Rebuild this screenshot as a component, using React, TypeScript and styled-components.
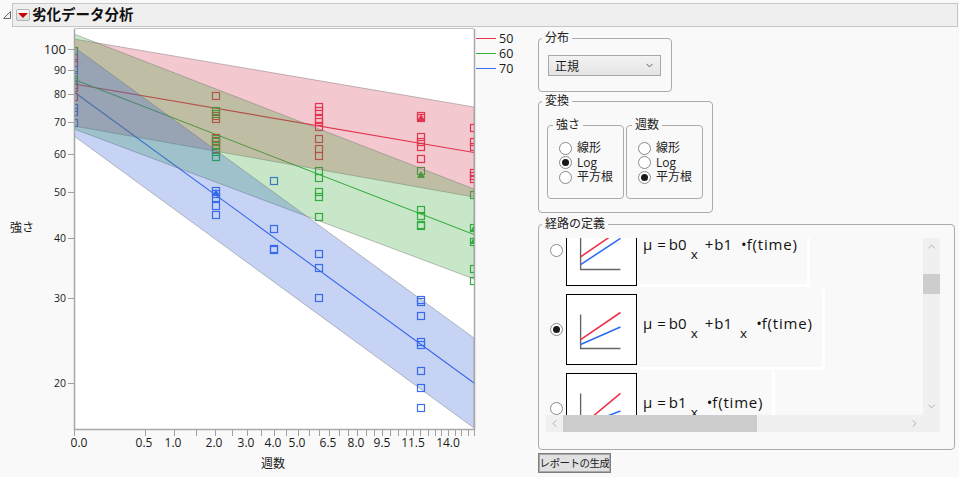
import React from 'react'
import styled, { createGlobalStyle } from 'styled-components'
import { ChevronDown, ChevronLeft, ChevronRight, ChevronUp } from 'lucide-react'

const FONT = `"Open Sans", "Noto Sans CJK JP", sans-serif`

const GlobalStyle = createGlobalStyle`
  html, body {
    margin: 0;
    background: #f9f9f9;
    color: #1a1a1a;
    font-family: ${FONT};
    overflow: hidden;
  }
`

const Page = styled.div`
  width: 959px;
  height: 477px;
  padding-top: 3px;
  box-sizing: border-box;
`

const Header = styled.header`
  display: flex;
  align-items: center;
  height: 24px;
  padding-left: 2px;
`

const Disclosure = styled.svg`
  width: 10px;
  height: 10px;
  flex: none;
`

const TitleBar = styled.div`
  display: flex;
  align-items: center;
  flex: 1;
  height: 100%;
  margin-right: 1px;
  padding-left: 3px;
  box-sizing: border-box;
  background: #efefef;
  border: 1px solid #c6c6c6;
`

const MenuButton = styled.span`
  display: flex;
  align-items: center;
  justify-content: center;
  width: 14px;
  height: 12px;
  margin-right: 2px;
  background: linear-gradient(#fafafa, #dedede);
  border: 1px solid #b4b4b4;
  border-radius: 2px;
  box-sizing: border-box;

  &::after {
    content: '';
    border-left: 5px solid transparent;
    border-right: 5px solid transparent;
    border-top: 5px solid #c80000;
  }
`

const Title = styled.h1`
  margin: 0;
  font-size: 14.5px;
  font-weight: 700;
  line-height: 20px;
  color: #111;
`

const Content = styled.main`
  display: flex;
`

const ChartArea = styled.div`
  display: flex;
  width: 538px;
  flex: none;
`

const Plot = styled.svg`
  width: 476px;
  height: 450px;
  flex: none;
  display: block;
`

const Legend = styled.ul`
  list-style: none;
  margin: 0;
  padding: 4px 0 0;
`

const LegendItem = styled.li`
  display: flex;
  align-items: center;
  gap: 3px;
  height: 15px;
  font-size: 12.5px;
  line-height: 15px;
`

const LegendLine = styled.span<{ $color: string }>`
  width: 20px;
  height: 1px;
  background: ${p => p.$color};
`

const Controls = styled.div`
  display: flex;
  flex-direction: column;
  padding-top: 4px;
`

const Group = styled.fieldset<{ $width: number; $height: number; $top?: number }>`
  width: ${p => p.$width}px;
  height: ${p => p.$height}px;
  margin: ${p => p.$top ?? 0}px 0 0;
  padding: 0 0 0 8px;
  box-sizing: border-box;
  border: 1px solid #ababab;
  border-radius: 4px;
  min-width: 0;
`

const GroupLabel = styled.legend<{ $shift?: number }>`
  margin-left: ${p => p.$shift ?? -5}px;
  padding: 0 3px;
  font-size: 12px;
  line-height: 14px;
  color: #222;
`

const Select = styled.div`
  display: flex;
  align-items: center;
  justify-content: space-between;
  width: 113px;
  height: 21px;
  margin: 10px 0 0 1px;
  padding: 0 5px 0 6px;
  box-sizing: border-box;
  font-size: 12px;
  background: linear-gradient(#f3f3f3, #e4e4e4);
  border: 1px solid #a8a8a8;
`

const TransformRow = styled.div`
  display: flex;
  gap: 2px;
  margin-top: 10px;
`

const InnerGroup = styled(Group)`
  padding: 0 0 0 11px;
`

const RadioColumn = styled.div`
  display: flex;
  flex-direction: column;
  margin-top: 9px;
`

const RadioRow = styled.label`
  display: flex;
  align-items: center;
  gap: 5px;
  height: 14.5px;
  font-size: 12px;
  line-height: 14px;
  color: #222;
`

const Radio = styled.span<{ $on?: boolean }>`
  display: flex;
  align-items: center;
  justify-content: center;
  width: 13px;
  height: 13px;
  flex: none;
  box-sizing: border-box;
  background: #fff;
  border: 1px solid #8a8a8a;
  border-radius: 50%;

  &::after {
    content: '';
    display: ${p => (p.$on ? 'block' : 'none')};
    width: 7px;
    height: 7px;
    background: #1a1a1a;
    border-radius: 50%;
  }
`

const ScrollPane = styled.div`
  display: grid;
  grid-template-columns: 377px 17px;
  grid-template-rows: 177px 17px;
  width: 394px;
  margin-top: 7px;
`

const Viewport = styled.div`
  overflow: hidden;
`

const RowList = styled.div`
  display: flex;
  flex-direction: column;
  gap: 8px;
  margin-top: -23px;
  padding-left: 4px;
`

const PathRow = styled.div`
  display: flex;
  align-items: center;
  gap: 3px;
  height: 71px;
`

const Thumbnail = styled.svg`
  width: 71px;
  height: 71px;
  flex: none;
  background: #fff;
  border: 1px solid #000;
  box-sizing: border-box;
`

const FormulaCell = styled.div<{ $bleed: number }>`
  align-self: flex-start;
  height: ${p => 71 + p.$bleed + (p.$bleed === 5 ? 5 : 1)}px;
  margin: -${p => p.$bleed}px 0 0 -3px;
  padding: ${p => p.$bleed + 17}px 9px 0 6px;
  box-sizing: border-box;
  border-right: 3px solid #fff;
  border-bottom: 3px solid #fff;
  font-size: 15px;
  line-height: 24px;
  white-space: nowrap;
  color: #111;
`

const Sym = styled.span<{ $gap?: number; $wide?: boolean }>`
  margin-left: ${p => p.$gap ?? 0}px;
  letter-spacing: ${p => (p.$wide ? '0.8px' : '0')};
`

const Sub = styled.span<{ $gap?: number }>`
  margin-left: ${p => p.$gap ?? 0}px;
  vertical-align: -9px;
  font-size: 13.5px;
`

const VTrack = styled.div`
  display: flex;
  flex-direction: column;
  background: #f0f0f0;
`

const HTrack = styled.div`
  display: flex;
  background: #f0f0f0;
`

const ArrowCell = styled.span`
  display: flex;
  align-items: center;
  justify-content: center;
  width: 17px;
  height: 17px;
  flex: none;
  color: #a6a6a6;
`

const VThumb = styled.div`
  width: 17px;
  height: 20px;
  margin-top: 19px;
  background: #cdcdcd;
`

const HThumb = styled.div`
  width: 194px;
  height: 17px;
  background: #cdcdcd;
`

const Filler = styled.div`
  flex: 1;
`

const Corner = styled.div`
  background: #f0f0f0;
`

const ReportButton = styled.button`
  align-self: flex-start;
  width: 73px;
  height: 20px;
  margin-top: 3px;
  padding: 0;
  font-family: ${FONT};
  font-size: 10.5px;
  line-height: 16px;
  letter-spacing: -0.5px;
  color: #222;
  white-space: nowrap;
  background: #e1e1e1;
  border: 1px solid #7f7f7f;
  outline: 1px solid #a8a8a8;
  outline-offset: -2px;
`

const RED = '#e8324e'
const GREEN = '#2fb03f'
const BLUE = '#3a6ef2'

const X0 = 74
const Y_OFFSET = 27
const tickX = (t: number) => X0 + 400 * Math.sqrt(t / 16)

const xLabels: [string, number][] = [
  ['0.0', 79], ['0.5', 144], ['1.0', 173], ['2.0', 214], ['3.0', 246], ['4.0', 273],
  ['5.0', 297], ['6.5', 328], ['8.0', 356], ['9.5', 382], ['11.5', 413], ['14.0', 448],
]

const yLabels: [string, number, number][] = [
  ['100', 49, 13], ['90', 70, 10.5], ['80', 94, 10.5], ['70', 122, 10.5], ['60', 154, 10.5],
  ['50', 192, 10.5], ['40', 238, 10.5], ['30', 298, 10.5], ['20', 383, 10.5],
]

const bands = [
  { color: '#d43b54', points: '74,39 474,107 474,197 74,126' },
  { color: '#3ba63b', points: '74,34 474,189 474,279 74,129' },
  { color: '#3362d8', points: '74,47 474,338 474,428 74,136' },
]

const lines = [
  { color: RED, d: 'M74 84L474 152.5' },
  { color: GREEN, d: 'M74 79.5L474 234.5' },
  { color: BLUE, d: 'M74 92L474 383' },
]

const markers: { color: string; x: number; ys: number[] }[] = [
  { color: RED, x: 74, ys: [58, 63, 85, 88, 97] },
  { color: GREEN, x: 74, ys: [51, 75, 80] },
  { color: BLUE, x: 74, ys: [70, 108, 112, 123] },
  { color: RED, x: 216, ys: [96, 116, 119, 138, 141, 145, 149] },
  { color: GREEN, x: 216, ys: [111, 114, 139, 142, 146, 152, 157] },
  { color: BLUE, x: 216, ys: [191, 194, 198, 206, 215] },
  { color: BLUE, x: 274, ys: [181, 229, 249, 250] },
  { color: RED, x: 319, ys: [107, 111, 119, 122, 127, 139, 149, 156] },
  { color: GREEN, x: 319, ys: [171, 178, 192, 197, 217] },
  { color: BLUE, x: 319, ys: [254, 268, 298] },
  { color: RED, x: 421, ys: [116, 118, 137, 142, 147, 159] },
  { color: GREEN, x: 421, ys: [171, 210, 216, 225, 226] },
  { color: BLUE, x: 421, ys: [300, 302, 316, 342, 345, 371, 388, 408] },
  { color: RED, x: 474, ys: [128, 142, 147, 173, 176, 179] },
  { color: GREEN, x: 474, ys: [195, 228, 242, 269, 281] },
]

const triangles: { color: string; x: number; y: number }[] = [
  { color: RED, x: 421, y: 118 },
  { color: GREEN, x: 421, y: 175 },
  { color: GREEN, x: 474, y: 229 },
  { color: GREEN, x: 474, y: 241 },
  { color: BLUE, x: 216, y: 193 },
]

const Chart = () => (
  <Plot viewBox={`0 ${Y_OFFSET} 476 450`}>
    <defs>
      <clipPath id="frame">
        <rect x={74} y={29} width={400} height={400} />
      </clipPath>
    </defs>
    <rect x={74} y={29} width={400} height={400} fill="#fff" />
    <g clipPath="url(#frame)">
      {lines.map(l => (
        <path key={l.d} d={l.d} stroke={l.color} strokeWidth={1.1} fill="none" />
      ))}
      {markers.map(m =>
        m.ys.map(y => (
          <rect
            key={`${m.color}-${m.x}-${y}`}
            x={m.x - 3.5}
            y={y - 3.5}
            width={7}
            height={7}
            fill="none"
            stroke={m.color}
            strokeWidth={1.2}
          />
        )),
      )}
      {triangles.map(t => (
        <path
          key={`${t.x}-${t.y}`}
          d={`M${t.x} ${t.y - 4}L${t.x + 4} ${t.y + 3}L${t.x - 4} ${t.y + 3}Z`}
          fill={t.color}
        />
      ))}
      {bands.map(b => (
        <polygon
          key={b.color}
          points={b.points}
          fill={b.color}
          fillOpacity={0.28}
          stroke="#6e6e6e"
          strokeOpacity={0.42}
          strokeWidth={1}
        />
      ))}
    </g>
    <path d="M74.5 29V429.5H474.5V29" fill="none" stroke="#a8a8a8" strokeWidth={1.5} />
    <path d="M74.5 28.5H474" fill="none" stroke="#c4c4c4" strokeWidth={1} />
    {Array.from({ length: 33 }, (_, i) => {
      const x = Math.round(tickX(i / 2)) + 0.5
      return <path key={i} d={`M${x} 430V436`} stroke="#a0a0a0" strokeWidth={1} />
    })}
    {xLabels.map(([text, x]) => (
      <text key={text} x={x} y={447} textAnchor="middle" fontSize={12} fill="#1a1a1a" fontFamily={FONT}>
        {text}
      </text>
    ))}
    {yLabels.map(([text, y, size]) => (
      <g key={text}>
        <path d={`M68 ${y + 0.5}H74`} stroke="#a0a0a0" strokeWidth={1} />
        <text x={66} y={y + size * 0.36} textAnchor="end" fontSize={size} fill="#1a1a1a" fontFamily={FONT}>
          {text}
        </text>
      </g>
    ))}
    <text x={22} y={232} textAnchor="middle" fontSize={12} fill="#1a1a1a" fontFamily={FONT}>強さ</text>
    <text x={273} y={468} textAnchor="middle" fontSize={12} fill="#1a1a1a" fontFamily={FONT}>週数</text>
  </Plot>
)

const Mini = ({ red, blue }: { red: string; blue: string }) => (
  <Thumbnail viewBox="0 0 71 71">
    <path d="M14 20V55H55" stroke="#666" strokeWidth={1.4} fill="none" />
    <path d={red} stroke="#ee3048" strokeWidth={1.6} fill="none" />
    <path d={blue} stroke="#2f6cf0" strokeWidth={1.6} fill="none" />
  </Thumbnail>
)

const RadioGroup = ({ selected }: { selected: string }) => (
  <RadioColumn>
    {['線形', 'Log', '平方根'].map(label => (
      <RadioRow key={label}>
        <Radio $on={label === selected} />
        {label}
      </RadioRow>
    ))}
  </RadioColumn>
)

export default function App() {
  return (
    <>
      <GlobalStyle />
      <Page>
        <Header>
          <Disclosure viewBox="0 0 10 10">
            <path d="M8.5 1.5V8.5H1.5Z" fill="#f4f4f4" stroke="#6a6a6a" strokeWidth={1} />
          </Disclosure>
          <TitleBar>
            <MenuButton />
            <Title>劣化データ分析</Title>
          </TitleBar>
        </Header>
        <Content>
          <ChartArea>
            <Chart />
            <Legend>
              <LegendItem><LegendLine $color={RED} />50</LegendItem>
              <LegendItem><LegendLine $color={GREEN} />60</LegendItem>
              <LegendItem><LegendLine $color={BLUE} />70</LegendItem>
            </Legend>
          </ChartArea>
          <Controls>
            <Group $width={134} $height={61}>
              <GroupLabel>分布</GroupLabel>
              <Select>
                正規
                <ChevronDown size={11} color="#555" />
              </Select>
            </Group>
            <Group $width={175} $height={119} $top={2}>
              <GroupLabel>変換</GroupLabel>
              <TransformRow>
                <InnerGroup $width={77} $height={81}>
                  <GroupLabel $shift={-6}>強さ</GroupLabel>
                  <RadioGroup selected="Log" />
                </InnerGroup>
                <InnerGroup $width={77} $height={81}>
                  <GroupLabel $shift={-6}>週数</GroupLabel>
                  <RadioGroup selected="平方根" />
                </InnerGroup>
              </TransformRow>
            </Group>
            <Group $width={417} $height={233} $top={4} style={{ paddingLeft: 7 }}>
              <GroupLabel $shift={-4}>経路の定義</GroupLabel>
              <ScrollPane>
                <Viewport>
                  <RowList>
                    <PathRow>
                      <Radio />
                      <Mini red="M14 42L55 14" blue="M14 50L55 23" />
                      <FormulaCell $bleed={2}>
                        μ<Sym $gap={5}>=</Sym><Sym $gap={3}>b0</Sym>
                        <Sub $gap={4}>x</Sub><Sym $gap={7}>+</Sym><Sym $gap={1}>b1</Sym>
                        <Sym $gap={9}>•</Sym><Sym $wide>f(time)</Sym>
                      </FormulaCell>
                    </PathRow>
                    <PathRow>
                      <Radio $on />
                      <Mini red="M14 46L55 18" blue="M14 51L55 33" />
                      <FormulaCell $bleed={5}>
                        μ<Sym $gap={5}>=</Sym><Sym $gap={3}>b0</Sym>
                        <Sub $gap={4}>x</Sub><Sym $gap={7}>+</Sym><Sym $gap={1}>b1</Sym>
                        <Sub $gap={8}>x</Sub><Sym $gap={9}>•</Sym><Sym $wide>f(time)</Sym>
                      </FormulaCell>
                    </PathRow>
                    <PathRow>
                      <Radio />
                      <Mini red="M14 54L55 20" blue="M14 54L55 38" />
                      <FormulaCell $bleed={2}>
                        μ<Sym $gap={5}>=</Sym><Sym $gap={3}>b1</Sym>
                        <Sub $gap={4}>x</Sub><Sym $gap={9}>•</Sym><Sym $wide>f(time)</Sym>
                      </FormulaCell>
                    </PathRow>
                  </RowList>
                </Viewport>
                <VTrack>
                  <ArrowCell><ChevronUp size={11} /></ArrowCell>
                  <VThumb />
                  <Filler />
                  <ArrowCell><ChevronDown size={11} /></ArrowCell>
                </VTrack>
                <HTrack>
                  <ArrowCell><ChevronLeft size={11} /></ArrowCell>
                  <HThumb />
                  <Filler />
                  <ArrowCell><ChevronRight size={11} /></ArrowCell>
                </HTrack>
                <Corner />
              </ScrollPane>
            </Group>
            <ReportButton>レポートの生成</ReportButton>
          </Controls>
        </Content>
      </Page>
    </>
  )
}
